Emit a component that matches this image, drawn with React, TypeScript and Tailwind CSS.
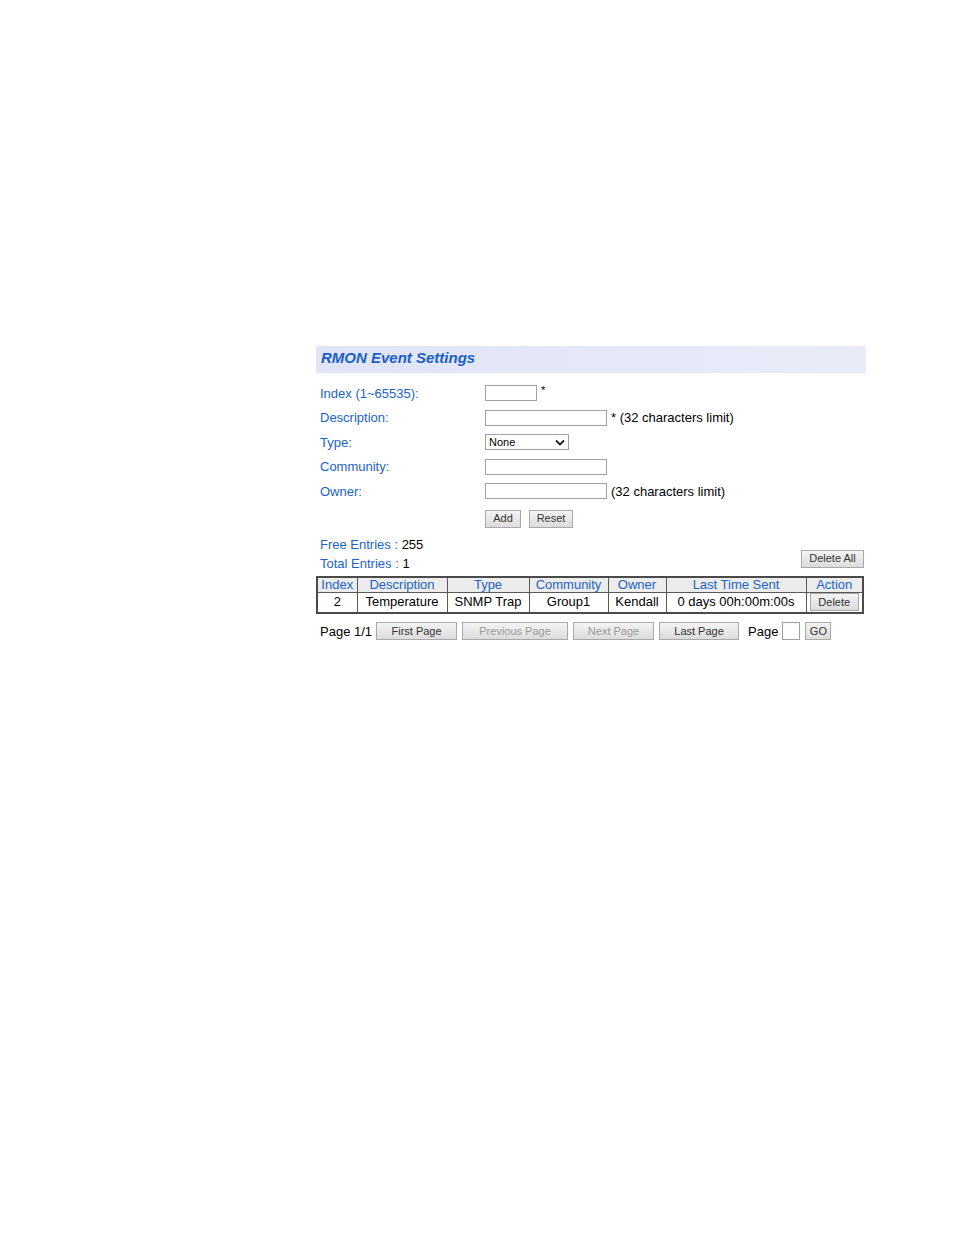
import React from "react";

const blue = "text-[#1b63c6]";

const Btn = ({
  label,
  className = "",
  disabled = false,
}: {
  label: string;
  className?: string;
  disabled?: boolean;
}) => (
  <button
    className={`h-[18px] border border-[#a9a9a9] bg-gradient-to-b from-[#f4f4f4] to-[#dcdcdc] text-[11px] leading-none ${
      disabled ? "text-[#9a9a9a]" : "text-[#333]"
    } ${className}`}
  >
    {label}
  </button>
);

const Field = ({ label, children }: { label: string; children: React.ReactNode }) => (
  <div className="flex h-[24.5px] items-center">
    <div className={`w-[169px] pl-1 ${blue}`}>{label}</div>
    <div className="flex items-center">{children}</div>
  </div>
);

const cols = [
  { name: "Index", w: "w-[40px]", val: "2" },
  { name: "Description", w: "w-[90px]", val: "Temperature" },
  { name: "Type", w: "w-[82px]", val: "SNMP Trap" },
  { name: "Community", w: "w-[79px]", val: "Group1" },
  { name: "Owner", w: "w-[58px]", val: "Kendall" },
  { name: "Last Time Sent", w: "w-[140px]", val: "0 days 00h:00m:00s" },
];

export default function App() {
  return (
    <div className="min-h-[1235px] w-[954px] bg-white pl-[316px] pt-[346px] font-['Liberation_Sans',Arial,sans-serif] text-[13px] text-black">
      <div className="w-[550px]">
        {/* Title bar */}
        <div className="flex h-[27px] items-center bg-gradient-to-r from-[#dfe4f6] to-[#e9ecf8] pb-[3px] pl-[5px]">
          <span className="text-[15px] font-bold italic text-[#1a5fc4]">RMON Event Settings</span>
        </div>

        {/* Form */}
        <div className="mt-[8px]">
          <Field label="Index (1~65535):">
            <input className="h-[16px] w-[52px] border border-[#a0a0a0] bg-white" />
            <span className="ml-[4px] -mt-[6px] text-[11px]">*</span>
          </Field>
          <Field label="Description:">
            <input className="h-[16px] w-[122px] border border-[#a0a0a0] bg-white" />
            <span className="ml-[4px]">* (32 characters limit)</span>
          </Field>
          <Field label="Type:">
            <div className="flex h-[16px] w-[84px] items-center justify-between border border-[#a0a0a0] bg-white px-[3px] text-[11px]">
              <span>None</span>
              <svg width="10" height="7" viewBox="0 0 10 7">
                <path d="M1 1.5 L5 5.5 L9 1.5" fill="none" stroke="#222" strokeWidth="1.8" />
              </svg>
            </div>
          </Field>
          <Field label="Community:">
            <input className="h-[16px] w-[122px] border border-[#a0a0a0] bg-white" />
          </Field>
          <Field label="Owner:">
            <input className="h-[16px] w-[122px] border border-[#a0a0a0] bg-white" />
            <span className="ml-[4px]">(32 characters limit)</span>
          </Field>
          <div className="mt-[6px] flex gap-[8px] pl-[169px]">
            <Btn label="Add" className="w-[36px]" />
            <Btn label="Reset" className="w-[44px]" />
          </div>
        </div>

        {/* Entries */}
        <div className="mt-[7px] flex items-end justify-between pr-[2px]">
          <div className="pl-1 leading-[19px]">
            <div>
              <span className={blue}>Free Entries : </span>255
            </div>
            <div>
              <span className={blue}>Total Entries : </span>1
            </div>
          </div>
          <Btn label="Delete All" className="mb-[5px] w-[63px]" />
        </div>

        {/* Table */}
        <table className="mt-[3px] w-[548px] border-collapse border-2 border-[#4a4a4a] text-center">
          <thead>
            <tr className="h-[16px] bg-[#ececec]">
              {cols.map((c) => (
                <th key={c.name} className={`${c.w} border border-[#5a5a5a] p-0 font-normal leading-[14px] ${blue}`}>
                  {c.name}
                </th>
              ))}
              <th className={`border border-[#5a5a5a] p-0 font-normal leading-[14px] ${blue}`}>Action</th>
            </tr>
          </thead>
          <tbody>
            <tr className="h-[20px]">
              {cols.map((c) => (
                <td key={c.name} className="border border-[#5a5a5a] p-0 leading-[18px]">
                  {c.val}
                </td>
              ))}
              <td className="border border-[#5a5a5a] p-0">
                <div className="flex justify-center">
                  <Btn label="Delete" className="w-[49px]" />
                </div>
              </td>
            </tr>
          </tbody>
        </table>

        {/* Pager */}
        <div className="mt-[8px] flex items-center pl-1">
          <span>Page 1/1</span>
          <Btn label="First Page" className="ml-[4px] w-[81px]" />
          <Btn label="Previous Page" className="ml-[5px] w-[106px]" disabled />
          <Btn label="Next Page" className="ml-[5px] w-[81px]" disabled />
          <Btn label="Last Page" className="ml-[5px] w-[80px]" />
          <span className="ml-[9px]">Page</span>
          <input className="ml-[4px] h-[18px] w-[18px] border border-[#a0a0a0] bg-white" />
          <Btn label="GO" className="ml-[5px] w-[26px]" />
        </div>
      </div>
    </div>
  );
}
